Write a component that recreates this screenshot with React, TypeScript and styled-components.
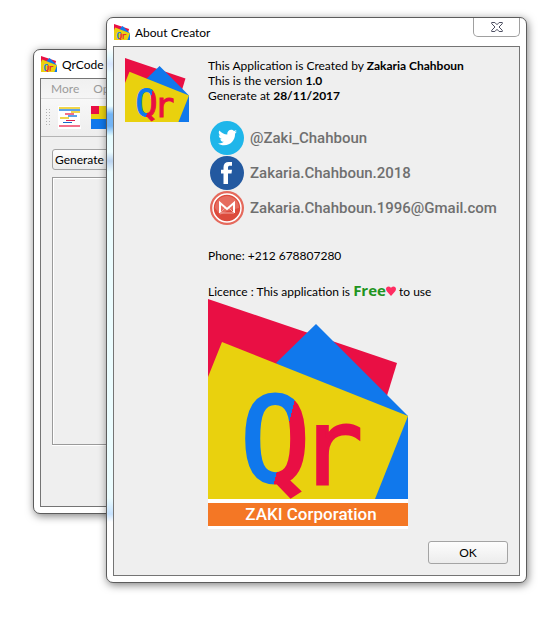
import React, { useId } from "react";
import styled, { createGlobalStyle } from "styled-components";
import { FaFacebookF, FaTwitter } from "react-icons/fa";

const GlobalStyle = createGlobalStyle`
  * { box-sizing: border-box; }
  body {
    margin: 0;
    background: #fff;
    color: #000;
    font: 12px/15px Lato, "Open Sans", sans-serif;
  }
  h1, h2, p { margin: 0; font-size: inherit; font-weight: inherit; }
  button { font: inherit; color: inherit; }
`;

const Desktop = styled.main`
  position: relative;
  min-height: 100vh;
  overflow: hidden;
`;

const Frame = styled.section<{ $front?: boolean }>`
  position: absolute;
  top: ${(p) => (p.$front ? 17 : 49)}px;
  left: ${(p) => (p.$front ? 106 : 33)}px;
  right: ${(p) => (p.$front ? 22 : 60)}px;
  padding: 0 6px 6px;
  border: 1px solid #5c5c5c;
  border-radius: 7px;
  background: #fff;
  box-shadow: 1px 2px 8px rgba(0, 0, 0, 0.5);
  ${(p) =>
    p.$front &&
    `background: linear-gradient(#fff 30px, #e6fbff 38px, #d8e6ff 46px, #ecfdff 55px,
      #ecfdff 88px, #72b4f5 96px, #72b4f5 108px, #e4fcff 118px, #ecfdff 134px,
      #b9d2ef 143px, #ecfdff 154px, #ecfdff 480px, #c6e2ff 496px, #fff 504px)
      left top / 7px 100% no-repeat #fff;`}
`;

const TitleBar = styled.header`
  display: flex;
  align-items: center;
  gap: 5px;
  height: 28px;
  padding-left: 1px;
`;

const Title = styled.h1`
  flex: 1;
`;

const CloseButton = styled.button`
  display: grid;
  place-items: center;
  align-self: flex-start;
  width: 47px;
  height: 19px;
  padding: 0;
  border: 1px solid #a0a0a0;
  border-top: 0;
  border-radius: 0 0 5px 5px;
  background: #fff;
`;

const Client = styled.div`
  border: 1px solid #747474;
  background: #efefef;
`;

const MenuBar = styled.nav`
  display: flex;
  gap: 14px;
  height: 20px;
  padding-left: 10px;
  background: linear-gradient(#f0f0f0, #f5f5f5);
  border-bottom: 1px solid #dedede;
`;

const MenuItem = styled.button`
  padding: 0;
  border: 0;
  background: none;
  color: #9b9b9b;
`;

const ToolBar = styled.div`
  display: flex;
  align-items: center;
  gap: 7px;
  height: 38px;
  padding-left: 5px;
  border-bottom: 1px solid #b4b4b4;
  background: linear-gradient(#f8f8f8, #ededed);
`;

const ToolButton = styled.button`
  display: flex;
  padding: 0;
  margin-right: 3px;
  border: 0;
  background: none;
`;

const Workspace = styled.div`
  padding: 12px 11px 61px;
`;

const PushButton = styled.button<{ $wide?: boolean }>`
  height: ${(p) => (p.$wide ? 21 : 23)}px;
  min-width: 80px;
  padding: 0 2px;
  border: 1px solid #a4a4a4;
  border-radius: 3px;
  background: linear-gradient(#fdfdfd, #ececec);
  text-align: ${(p) => (p.$wide ? "left" : "center")};
  width: ${(p) => (p.$wide ? "100%" : "auto")};
`;

const Preview = styled.div`
  min-height: 268px;
  margin-top: 7px;
  border: 1px solid #9a9a9a;
  box-shadow: inset 1px 1px #fff, 0 1px #fff;
`;

const About = styled.div`
  display: grid;
  grid-template-columns: 64px 1fr;
  gap: 19px;
  padding: 11px 11px 0;
`;

const Contacts = styled.ul`
  list-style: none;
  margin: 17px 0 23px;
  padding: 0 0 0 2px;
`;

const Contact = styled.li`
  height: 35px;
`;

const ContactLink = styled.a`
  display: flex;
  align-items: center;
  gap: 6px;
  height: 100%;
  color: #6f6f6f;
  font: 500 15px/20px Roboto, sans-serif;
  text-decoration: none;
`;

const Disc = styled.span<{ $color: string }>`
  display: grid;
  place-items: center;
  width: 34px;
  height: 34px;
  border-radius: 50%;
  background: ${(p) => p.$color};
  color: #fff;
`;

const Licence = styled.p`
  margin-top: 20px;
  height: 16px;
  white-space: nowrap;
`;

const Free = styled.strong`
  color: #219421;
  font: 700 15px/15px "Open Sans", sans-serif;
`;

const Brand = styled.figure`
  width: 200px;
  margin: 0;
`;

const Caption = styled.figcaption`
  border: solid #fff;
  border-width: 4px 0 3px;
  background: #f47725;
  color: #fff;
  font: 500 17px/23px Roboto, sans-serif;
  text-align: center;
  padding-left: 6px;
`;

const Actions = styled.footer`
  display: flex;
  justify-content: flex-end;
  padding: 12px 11px 11px;
`;

function QrLogo({ size }: { size: number }) {
  const tone = useId();
  return (
    <svg width={size} height={size} viewBox="0 0 200 200" display="block" aria-label="Qr">
      <defs>
        <linearGradient id={tone} gradientUnits="userSpaceOnUse" x1="66" y1="141" x2="86" y2="146">
          <stop offset="0.5" stopColor="#1078ec" />
          <stop offset="0.5" stopColor="#e90f44" />
        </linearGradient>
      </defs>
      <path fill="#e90f44" d="M0 0 189 64 178 100 0 100Z" />
      <path fill="#1078ec" d="M108 25 68 64 150 120 200 200V117Z" />
      <path fill="#1078ec" d="M200 117V200H160Z" />
      <path fill="#e9d10e" d="M14 43 200 117 167 200H0V78Z" />
      <g fontFamily="'DejaVu Sans Mono'" strokeWidth="3">
        <text x="32" y="182" fontSize="117" fill={`url(#${tone})`} stroke={`url(#${tone})`}>Q</text>
        <text x="91" y="185" fontSize="106" fill="#e90f44" stroke="#e90f44">r</text>
      </g>
    </svg>
  );
}

function GmailIcon() {
  return (
    <svg width="34" height="34" viewBox="0 0 34 34" aria-hidden="true">
      <circle cx="17" cy="17" r="17" fill="#e5695c" />
      <circle cx="17" cy="17" r="14" fill="#dc4b3c" stroke="#fff" strokeWidth="1.5" />
      <path d="M5 17a12 12 0 0 1 24 0L17 20 10 24Z" fill="#e66c5f" />
      <path d="M10 22V12l7 6 7-6v10" fill="none" stroke="#fff" strokeWidth="2" />
      <path d="M10 22h14M10 22l5-5m9 5-5-5" fill="none" stroke="#f2aaa2" />
    </svg>
  );
}

function FacebookIcon() {
  return (
    <svg width="12" height="22" viewBox="0 0 12 22" aria-hidden="true">
      <path
        fill="currentColor"
        d="M2.500 22V11.500H0V7.800h2.500V5.200C2.500 1.800 4.500 0 7.700 0H11v3.800H9C7.600 3.800 7 4.400 7 5.600v2.200h4l-.5 3.700H7V22Z"
      />
    </svg>
  );
}

function CloseIcon() {
  return (
    <svg width="12" height="10" viewBox="0 0 12 10" aria-hidden="true">
      <path
        d="M.7.5h3.2L6 2.7 8.1.5h3.2v1.2L8 5l3.3 3.3v1.2H8.1L6 7.3 3.9 9.5H.7V8.3L4 5 .7 1.7Z"
        fill="#fff"
        stroke="#4d4f62"
      />
    </svg>
  );
}

function Grip() {
  return (
    <svg width="5" height="18" viewBox="0 0 5 18" aria-hidden="true">
      <path d="M.5 0v18M3.500 0v18" stroke="#b3b3b3" strokeDasharray="1 2" />
    </svg>
  );
}

function LinesIcon() {
  return (
    <svg width="23" height="23" viewBox="0 0 23 23" aria-hidden="true">
      <path d="M0 0h22v19l2 4H0Z" fill="#fff" />
      <path d="M1 2h21M13 6h9M2 12h9" stroke="#f0d64c" strokeWidth="2" />
      <path d="M1 4h21M10 10h9" stroke="#5da3ea" strokeWidth="2" />
      <path d="M7 8h9M1 20h21" stroke="#f4708a" strokeWidth="2" />
      <path d="M8 14.500h9" stroke="#dd1f4c" />
      <path d="M5 16.500h9" stroke="#1968c9" />
    </svg>
  );
}

function BlocksIcon() {
  return (
    <svg width="23" height="23" viewBox="0 0 23 23" aria-hidden="true">
      <path fill="#ead10f" d="M0 0h23v23H0Z" />
      <path fill="#e90f44" d="M0 0h8v8H0Z" />
      <path fill="#1078ec" d="M0 13h23v10H0Z" />
    </svg>
  );
}

const contacts = [
  {
    label: "@Zaki_Chahboun",
    href: "#twitter",
    icon: <Disc $color="#1fb6ea"><FaTwitter size={19} /></Disc>,
  },
  {
    label: "Zakaria.Chahboun.2018",
    href: "#facebook",
    icon: <Disc $color="#2359a0"><FacebookIcon /></Disc>,
  },
  {
    label: "Zakaria.Chahboun.1996@Gmail.com",
    href: "mailto:Zakaria.Chahboun.1996@Gmail.com",
    icon: <GmailIcon />,
  },
];

export default function App() {
  return (
    <Desktop>
      <GlobalStyle />
      <Frame aria-label="QrCode">
        <TitleBar>
          <QrLogo size={16} />
          <Title>QrCode</Title>
        </TitleBar>
        <Client>
          <MenuBar>
            <MenuItem>More</MenuItem>
            <MenuItem>Options</MenuItem>
          </MenuBar>
          <ToolBar>
            <Grip />
            <ToolButton aria-label="List"><LinesIcon /></ToolButton>
            <ToolButton aria-label="Colors"><BlocksIcon /></ToolButton>
          </ToolBar>
          <Workspace>
            <PushButton $wide>Generate QrCode</PushButton>
            <Preview />
          </Workspace>
        </Client>
      </Frame>

      <Frame $front role="dialog" aria-label="About Creator">
        <TitleBar>
          <QrLogo size={16} />
          <Title>About Creator</Title>
          <CloseButton aria-label="Close"><CloseIcon /></CloseButton>
        </TitleBar>
        <Client>
          <About>
            <QrLogo size={64} />
            <div>
              <p>This Application is Created by <b>Zakaria Chahboun</b></p>
              <p>This is the version <b>1.0</b></p>
              <p>Generate at <b>28/11/2017</b></p>
              <Contacts>
                {contacts.map((c) => (
                  <Contact key={c.label}>
                    <ContactLink href={c.href}>{c.icon}{c.label}</ContactLink>
                  </Contact>
                ))}
              </Contacts>
              <p>Phone: +212 678807280</p>
              <Licence>
                Licence : This application is <Free>Free</Free>
                <svg width="10" height="10" viewBox="0 0 10 10" aria-label="love">
                  <path fill="#ff2d62" d="M5 10 1 5.5C-1 3 .3.5 2.5.5 4 .5 4.700 1.300 5 2 5.300 1.300 6 .5 7.500.5 9.700.5 11 3 9 5.500Z" />
                </svg>{" "}
                to use
              </Licence>
              <Brand>
                <QrLogo size={200} />
                <Caption>ZAKI Corporation</Caption>
              </Brand>
            </div>
          </About>
          <Actions>
            <PushButton>OK</PushButton>
          </Actions>
        </Client>
      </Frame>
    </Desktop>
  );
}
